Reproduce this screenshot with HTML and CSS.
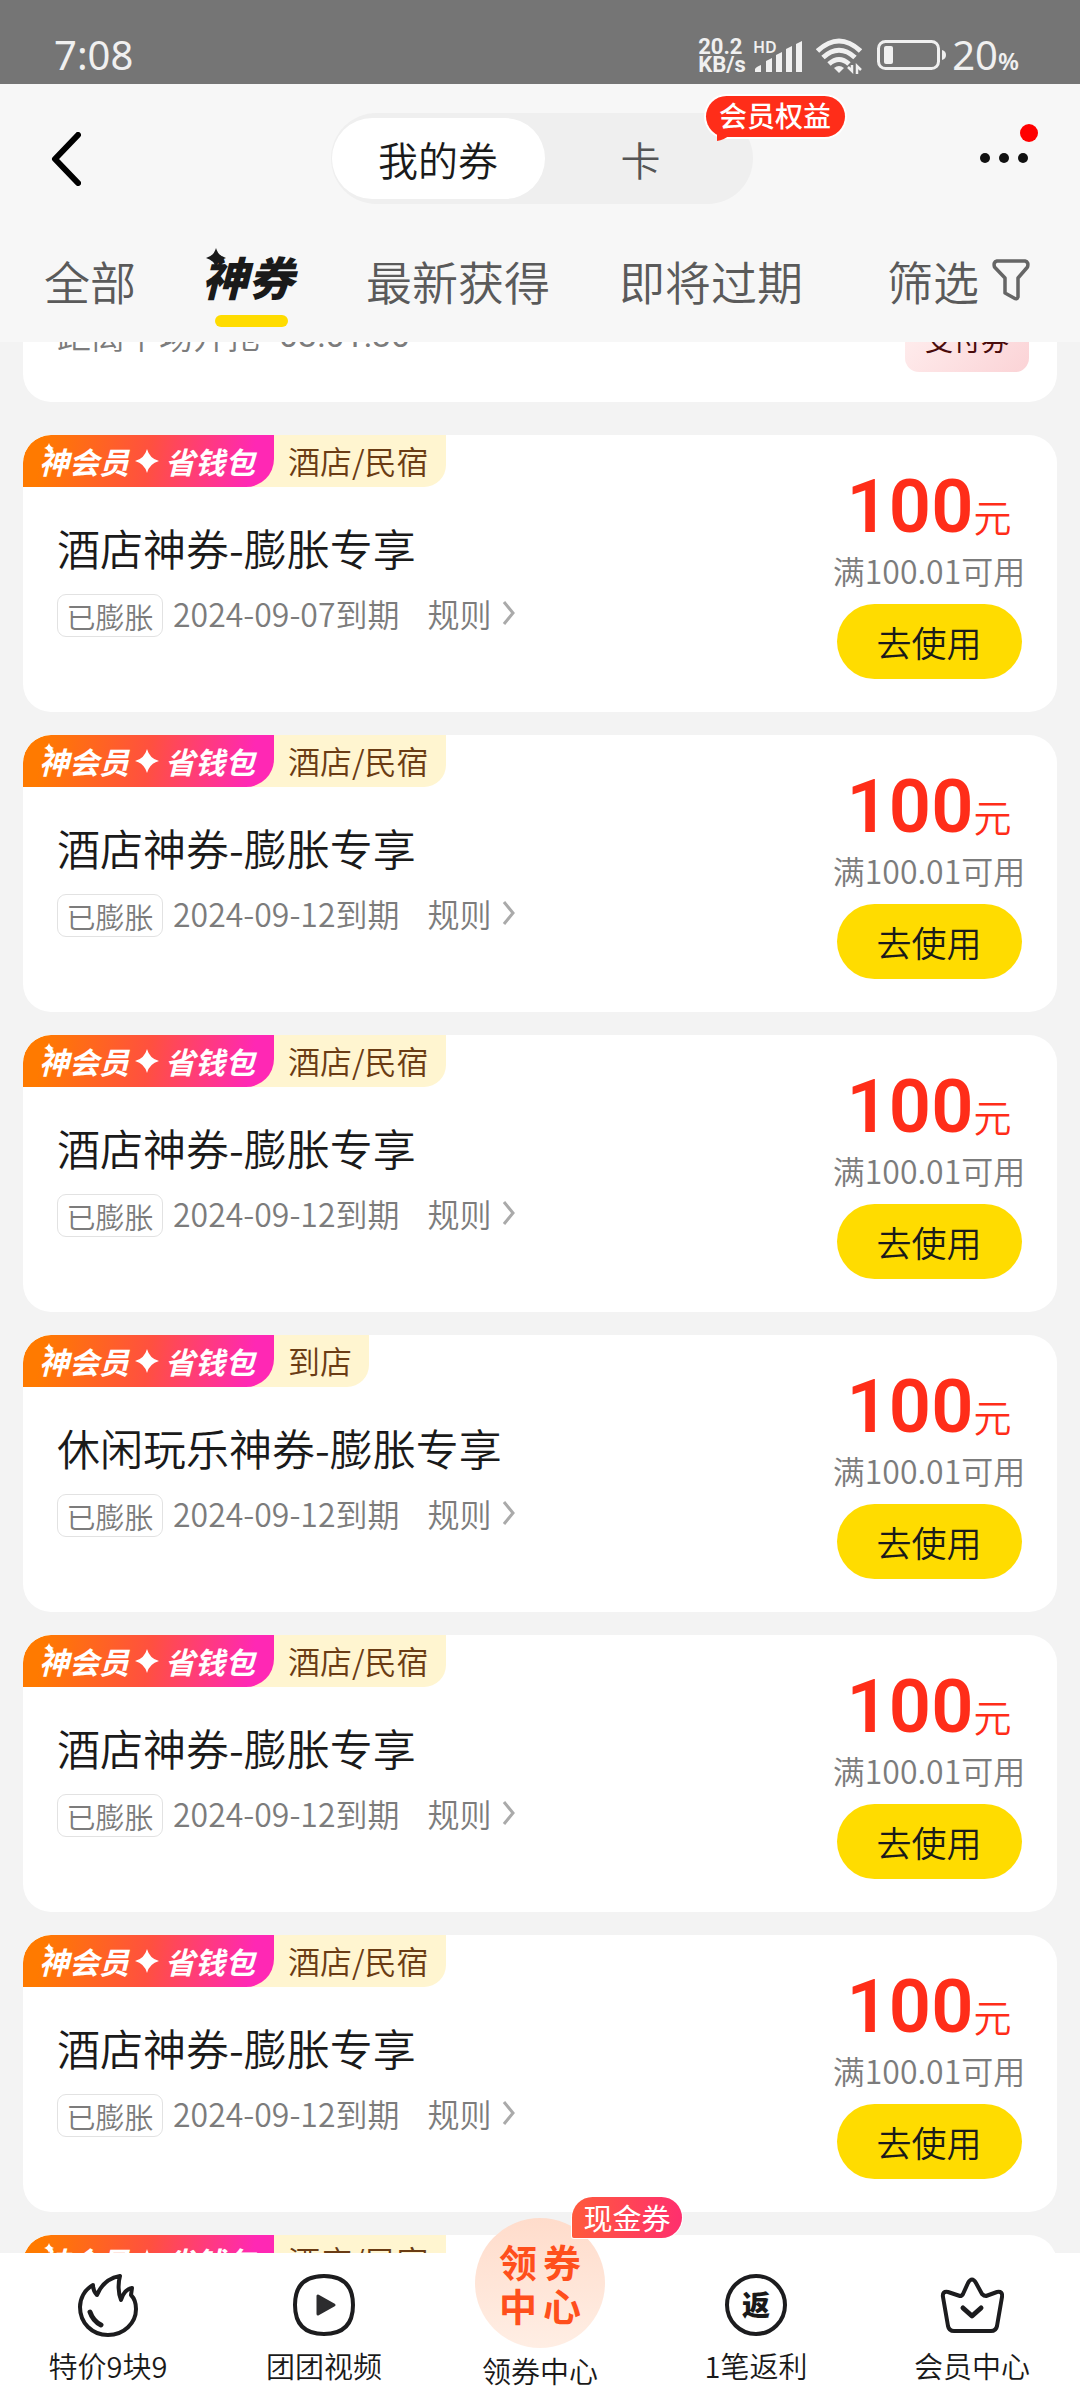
FILE: index.html
```html
<!DOCTYPE html>
<html lang="zh-CN">
<head>
<meta charset="utf-8">
<meta name="viewport" content="width=device-width">
<title>我的券</title>
<link rel="stylesheet" href="styles.css">
</head>
<body>
<svg class="defs" width="0" height="0" aria-hidden="true">
  <symbol id="spark" viewBox="0 0 24 24"><path d="M12 0Q14.500 9.500 24 12Q14.500 14.500 12 24Q9.500 14.500 0 12Q9.500 9.500 12 0Z" fill="currentColor"/></symbol>
  <symbol id="chevron" viewBox="0 0 14 26"><path d="M2 2L11 13L2 24" fill="none" stroke="currentColor" stroke-width="3"/></symbol>
</svg>

<div class="status">
  <span class="clock">7:08</span>
  <div class="status-right">
    <span class="speed">20.2<br>KB/s</span>
    <svg class="signal" viewBox="0 0 52 36" role="img" aria-label="HD">
      <text x="0" y="15" class="hd">HD</text>
      <g fill="#f0f0f0"><path d="M2 34V31Q3 29 8 27V34Z"/><path d="M13 34V23L19 20V34Z"/><path d="M23 34V17L29 14V34Z"/><path d="M33 34V11L39 8V34Z"/><path d="M43 34V6L49 3V34Z"/></g>
    </svg>
    <svg class="wifi" viewBox="0 0 46 36" aria-hidden="true">
      <g fill="none" stroke="#f0f0f0" stroke-width="5"><path d="M1.500 13Q23 -7 44.500 13"/><path d="M7 19.500Q23 5 39 19.500"/><path d="M13 26Q23 17 33 26"/></g>
      <path d="M18 30Q23 26 28 30L23 35Z" fill="#f0f0f0"/><path d="M32 29L36 33V27M41 36V28L45 32" fill="none" stroke="#f0f0f0" stroke-width="2.500"/>
    </svg>
    <svg class="battery" viewBox="0 0 70 32" aria-hidden="true">
      <rect x="1.500" y="2.500" width="60" height="27" rx="7" fill="none" stroke="#f0f0f0" stroke-width="3"/><rect x="7" y="7" width="9" height="18" rx="2" fill="#f0f0f0"/><path d="M65 11Q69 12 69 16Q69 20 65 21Z" fill="#f0f0f0"/>
    </svg>
    <span class="level">20<small>%</small></span>
  </div>
</div>

<header class="top">
  <div class="bar">
    <button class="back" aria-label="返回"><svg viewBox="0 0 30 54"><path d="M27 3L4 27L27 51" fill="none" stroke="#000" stroke-width="6" stroke-linecap="round" stroke-linejoin="round"/></svg></button>
    <div class="segment">
      <button class="seg seg-on">我的券</button>
      <button class="seg">卡</button>
      <span class="perk">会员权益<svg viewBox="0 0 14 12" aria-hidden="true"><path d="M0 0L0 11Q7 10 13 5Z" fill="#ff2d19"/></svg></span>
    </div>
    <button class="more" aria-label="更多"><i></i><i></i><i></i><b></b></button>
  </div>
  <nav class="tabs">
    <a href="#">全部</a>
    <a href="#" class="tab-on">神券<svg><use href="#spark"/></svg></a>
    <a href="#">最新获得</a>
    <a href="#">即将过期</a>
    <button class="filter">筛选<svg viewBox="0 0 38 42" aria-hidden="true"><path d="M5 2H33Q37 3 35.500 8L26 19V38Q25 41 22 39L13 34V19L2.500 8Q1 3 5 2Z" fill="none" stroke="#666" stroke-width="3.500" stroke-linejoin="round"/></svg></button>
  </nav>
</header>

<main class="list">
  <article class="card card-past">
    <span class="countdown">距离下场开抢 <time>03:01:30</time></span>
    <span class="pay">支付券</span>
  </article>

  <article class="card">
    <div class="ribbon"><span class="brand">神会员<svg><use href="#spark"/></svg>省钱包<svg class="glint"><use href="#spark"/></svg></span><span class="kind">酒店/民宿</span></div>
    <div class="info"><h2>酒店神券-膨胀专享</h2><p><span class="tag">已膨胀</span><time>2024-09-07到期</time><a href="#">规则<svg><use href="#chevron"/></svg></a></p></div>
    <div class="offer"><div class="price">100<small>元</small></div><div class="limit">满100.01可用</div><button class="use">去使用</button></div>
  </article>
  <article class="card">
    <div class="ribbon"><span class="brand">神会员<svg><use href="#spark"/></svg>省钱包<svg class="glint"><use href="#spark"/></svg></span><span class="kind">酒店/民宿</span></div>
    <div class="info"><h2>酒店神券-膨胀专享</h2><p><span class="tag">已膨胀</span><time>2024-09-12到期</time><a href="#">规则<svg><use href="#chevron"/></svg></a></p></div>
    <div class="offer"><div class="price">100<small>元</small></div><div class="limit">满100.01可用</div><button class="use">去使用</button></div>
  </article>
  <article class="card">
    <div class="ribbon"><span class="brand">神会员<svg><use href="#spark"/></svg>省钱包<svg class="glint"><use href="#spark"/></svg></span><span class="kind">酒店/民宿</span></div>
    <div class="info"><h2>酒店神券-膨胀专享</h2><p><span class="tag">已膨胀</span><time>2024-09-12到期</time><a href="#">规则<svg><use href="#chevron"/></svg></a></p></div>
    <div class="offer"><div class="price">100<small>元</small></div><div class="limit">满100.01可用</div><button class="use">去使用</button></div>
  </article>
  <article class="card">
    <div class="ribbon"><span class="brand">神会员<svg><use href="#spark"/></svg>省钱包<svg class="glint"><use href="#spark"/></svg></span><span class="kind">到店</span></div>
    <div class="info"><h2>休闲玩乐神券-膨胀专享</h2><p><span class="tag">已膨胀</span><time>2024-09-12到期</time><a href="#">规则<svg><use href="#chevron"/></svg></a></p></div>
    <div class="offer"><div class="price">100<small>元</small></div><div class="limit">满100.01可用</div><button class="use">去使用</button></div>
  </article>
  <article class="card">
    <div class="ribbon"><span class="brand">神会员<svg><use href="#spark"/></svg>省钱包<svg class="glint"><use href="#spark"/></svg></span><span class="kind">酒店/民宿</span></div>
    <div class="info"><h2>酒店神券-膨胀专享</h2><p><span class="tag">已膨胀</span><time>2024-09-12到期</time><a href="#">规则<svg><use href="#chevron"/></svg></a></p></div>
    <div class="offer"><div class="price">100<small>元</small></div><div class="limit">满100.01可用</div><button class="use">去使用</button></div>
  </article>
  <article class="card">
    <div class="ribbon"><span class="brand">神会员<svg><use href="#spark"/></svg>省钱包<svg class="glint"><use href="#spark"/></svg></span><span class="kind">酒店/民宿</span></div>
    <div class="info"><h2>酒店神券-膨胀专享</h2><p><span class="tag">已膨胀</span><time>2024-09-12到期</time><a href="#">规则<svg><use href="#chevron"/></svg></a></p></div>
    <div class="offer"><div class="price">100<small>元</small></div><div class="limit">满100.01可用</div><button class="use">去使用</button></div>
  </article>
  <article class="card">
    <div class="ribbon"><span class="brand">神会员<svg><use href="#spark"/></svg>省钱包<svg class="glint"><use href="#spark"/></svg></span><span class="kind">酒店/民宿</span></div>
  </article>
</main>

<nav class="dock">
  <a href="#"><svg viewBox="0 0 64 64" aria-hidden="true"><g fill="none" stroke="#1c1c1e" stroke-width="4" stroke-linecap="round" stroke-linejoin="round"><path d="M17 12C8 17 4 26 4 34C4 50 16 62 32 62C48 62 60 50 60 36C60 29 57 24 55 22L56 15C50 16 47 20 45 27C42 20 42 10 44 3C33 5 25 12 21 22C18 19 17 16 17 12Z"/><path d="M14 39Q17 48 25 52" stroke-width="5"/></g></svg>特价9块9</a>
  <a href="#"><svg viewBox="0 0 64 64" aria-hidden="true"><path d="M32 3Q61 3 61 32T32 61Q3 61 3 32T32 3Z" fill="none" stroke="#1c1c1e" stroke-width="4"/><path d="M26 23V41L42 32Z" fill="#2c2c2e" stroke="#2c2c2e" stroke-width="3" stroke-linejoin="round"/></svg>团团视频</a>
  <a href="#" class="center"><span class="disc"><span>领</span><span>券</span><span>中</span><span>心</span></span><span class="cash">现金券</span>领券中心</a>
  <a href="#"><span class="rebate">返</span>1笔返利</a>
  <a href="#"><svg viewBox="0 0 64 64" aria-hidden="true"><g fill="none" stroke="#1c1c1e" stroke-width="4" stroke-linecap="round" stroke-linejoin="round"><path d="M3 24Q2 18 8 19L20 23Q22 23 23 21L28 10Q32 3 36 10L42 21Q44 23 46 23L57 19Q63 18 62 24L57 53Q56 58 51 58H14Q9 58 8 53Z"/><path d="M23 35L32 43L41 35" stroke-width="5"/></g></svg>会员中心</a>
</nav>
</body>
</html>
```

FILE: styles.css
```css
* { box-sizing: border-box; }
body {
  margin: 0;
  height: 100vh;
  display: flex;
  flex-direction: column;
  background: #f3f3f3;
  color: #1a1a1a;
  font-family: "Noto Sans CJK SC", sans-serif;
  font-weight: 350;
  overflow: hidden;
}
button { border: 0; padding: 0; background: none; color: inherit; font: inherit; }
a { color: inherit; text-decoration: none; }
svg { display: block; flex: none; }
.defs { position: absolute; }

.status {
  height: 84px;
  flex: none;
  display: flex;
  justify-content: space-between;
  padding: 35px 61px 0 54px;
  background: #757575;
  color: #f0f0f0;
  font-family: "Noto Sans", sans-serif;
  font-weight: 400;
}
.clock, .level { font-size: 40px; line-height: 40px; }
.status-right { display: flex; align-items: flex-start; }
.speed { width: 55px; font: 700 22px/18px Roboto, sans-serif; padding-top: 3px; white-space: nowrap; }
.signal { width: 52px; height: 36px; margin-right: 11px; margin-top: 3px; }
.hd { font: 600 16px "Noto Sans", sans-serif; fill: #f0f0f0; }
.wifi { width: 46px; height: 36px; margin: 3px 15px 0 0; }
.battery { width: 70px; height: 32px; margin: 4px 5px 0 0; }
.level small { font-size: 24px; font-weight: 600; }

.top { flex: none; height: 258px; background: #f7f7f7; }
.bar { height: 136px; padding: 29px 48px 0 51px; display: grid; grid-template-columns: 1fr auto 1fr; }
.back { width: 30px; height: 54px; margin-top: 19px; }
.back svg { width: 30px; height: 54px; }
.segment { position: relative; display: flex; width: 422px; height: 91px; padding: 5px 16px 5px 1px; border-radius: 46px; background: #efefef; }
.seg { flex: 192; border-radius: 41px; font-size: 40px; color: #555; }
.seg-on { flex: 213; background: #fff; color: #1a1a1a; }
.perk { position: absolute; left: 375px; top: -17px; width: 139px; height: 41px; border-radius: 21px; background: #ff2d19; box-shadow: 0 0 0 2px #fff; color: #fff; font-size: 28px; line-height: 39px; font-weight: 500; text-align: center; }
.perk svg { position: absolute; left: 11px; top: 34px; width: 14px; height: 12px; }
.more { position: relative; justify-self: end; display: flex; gap: 9px; width: 52px; height: 20px; margin-top: 40px; }
.more i { width: 10px; height: 10px; border-radius: 5px; background: #111; }
.more b { position: absolute; left: 40px; top: -29px; width: 18px; height: 18px; border-radius: 9px; background: #f00; }
.tabs { display: flex; align-items: flex-start; gap: 69px; padding: 27px 50px 0 44px; color: #5a5a5a; font-size: 46px; line-height: 66px; white-space: nowrap; }
.tab-on { position: relative; margin: 0 3px 0 -3px; color: #1a1a1a; font-weight: 900; font-style: italic; line-height: 58px; }
.tab-on::after { content: ""; position: absolute; left: 13px; top: 68px; width: 73px; height: 12px; border-radius: 6px; background: #ffdc00; }
.tab-on svg { position: absolute; left: 4px; top: 1px; width: 20px; height: 20px; }
.filter { margin-left: auto; display: flex; gap: 13px; line-height: 66px; }
.filter svg { width: 38px; height: 42px; margin-top: 12px; }

.list { flex: 1; min-height: 0; overflow: hidden; padding: 0 23px; display: flex; flex-direction: column; gap: 23px; }
.card { position: relative; flex: none; min-height: 277px; display: grid; grid-template-columns: 1fr 188px; grid-template-rows: 52px 1fr; padding-right: 34px; border-radius: 28px; background: #fff; overflow: hidden; }
.card-past { display: flex; justify-content: space-between; align-items: flex-end; margin: -217px 0 10px; padding: 0 28px 30px 34px; }
.countdown { display: flex; gap: 18px; font-size: 34px; line-height: 48px; padding-bottom: 13px; color: #7c7c7c; }
.countdown time { font-family: Roboto, sans-serif; font-weight: 400; }
.pay { width: 124px; height: 60px; border-radius: 14px; background: linear-gradient(135deg, #fff0f0, #fbd3d6); color: #4a0b0b; font-size: 28px; line-height: 54px; font-weight: 400; text-align: center; }
.ribbon { grid-column: 1; display: flex; justify-self: start; border-bottom-right-radius: 22px; background: #fff5d0; }
.brand { position: relative; display: flex; align-items: center; gap: 6px; width: 251px; padding-left: 16px; border-radius: 28px 0 28px 0; background: linear-gradient(100deg, #ff7a00 8%, #ff5040 50%, #ff28b4 90%); color: #fff; font-size: 30px; font-weight: 700; font-style: italic; line-height: 50px; white-space: nowrap; }
.brand svg { width: 24px; height: 24px; }
.brand .glint { position: absolute; left: 21px; top: 8px; width: 10px; height: 10px; }
.kind { padding: 0 17px 0 14px; color: #6b3c14; font-size: 32px; line-height: 50px; }
.info { grid-column: 1; padding: 28px 0 0 34px; white-space: nowrap; }
.info h2 { margin: 0 0 13px; font-size: 43px; line-height: 64px; font-weight: 350; }
.info p { margin: 0; display: flex; align-items: flex-start; color: #7c7c7c; font-size: 32px; line-height: 42px; }
.tag { width: 106px; height: 43px; margin: 2px 10px 0 0; border: 1px solid #e2e2e2; border-radius: 9px; font-size: 29px; line-height: 42px; text-align: center; }
.info a { display: flex; align-items: center; gap: 10px; margin-left: 28px; }
.info a svg { width: 14px; height: 26px; color: #aaa; }
.offer { grid-column: 2; grid-row: 1 / 3; display: flex; flex-direction: column; align-items: center; padding-top: 38px; white-space: nowrap; }
.price { height: 68px; color: #ff2d19; font: 600 74px/68px Roboto, sans-serif; }
.price small { font: 350 38px/60px "Noto Sans CJK SC", sans-serif; }
.limit { margin: 7px 0 11px; color: #7c7c7c; font-size: 32px; line-height: 45px; }
.use { width: 185px; height: 75px; border-radius: 38px; background: #ffdc00; color: #1a1a1a; font-size: 35px; }

.dock { flex: none; height: 147px; display: grid; grid-template-columns: repeat(5, 1fr); background: #fff; position: relative; }
.dock a { position: relative; display: flex; flex-direction: column; align-items: center; gap: 7px; padding-top: 20px; font-size: 29px; line-height: 42px; color: #1a1a1a; }
.dock svg { width: 64px; height: 64px; }
.rebate { width: 62px; height: 62px; margin: 1px; border: 4px solid #1c1c1e; border-radius: 31px; font-size: 28px; line-height: 52px; font-weight: 900; text-align: center; }
.dock .center { margin-top: -35px; padding-top: 0; gap: 1px; }
.disc { width: 130px; height: 130px; display: grid; grid-template-columns: 38px 38px; gap: 0 6px; place-content: center; border-radius: 65px; background: linear-gradient(#ffdccb, #ffeee4); color: #ff4f1c; font-size: 38px; line-height: 44px; font-weight: 700; text-align: center; }
.cash { position: absolute; left: 140px; top: -21px; width: 110px; height: 41px; border-radius: 21px 21px 21px 2px; background: linear-gradient(90deg, #ff5a3c, #ff2f6e); box-shadow: 0 0 0 1px #fff; color: #fff; font-size: 29px; line-height: 41px; font-weight: 400; text-align: center; }
```
